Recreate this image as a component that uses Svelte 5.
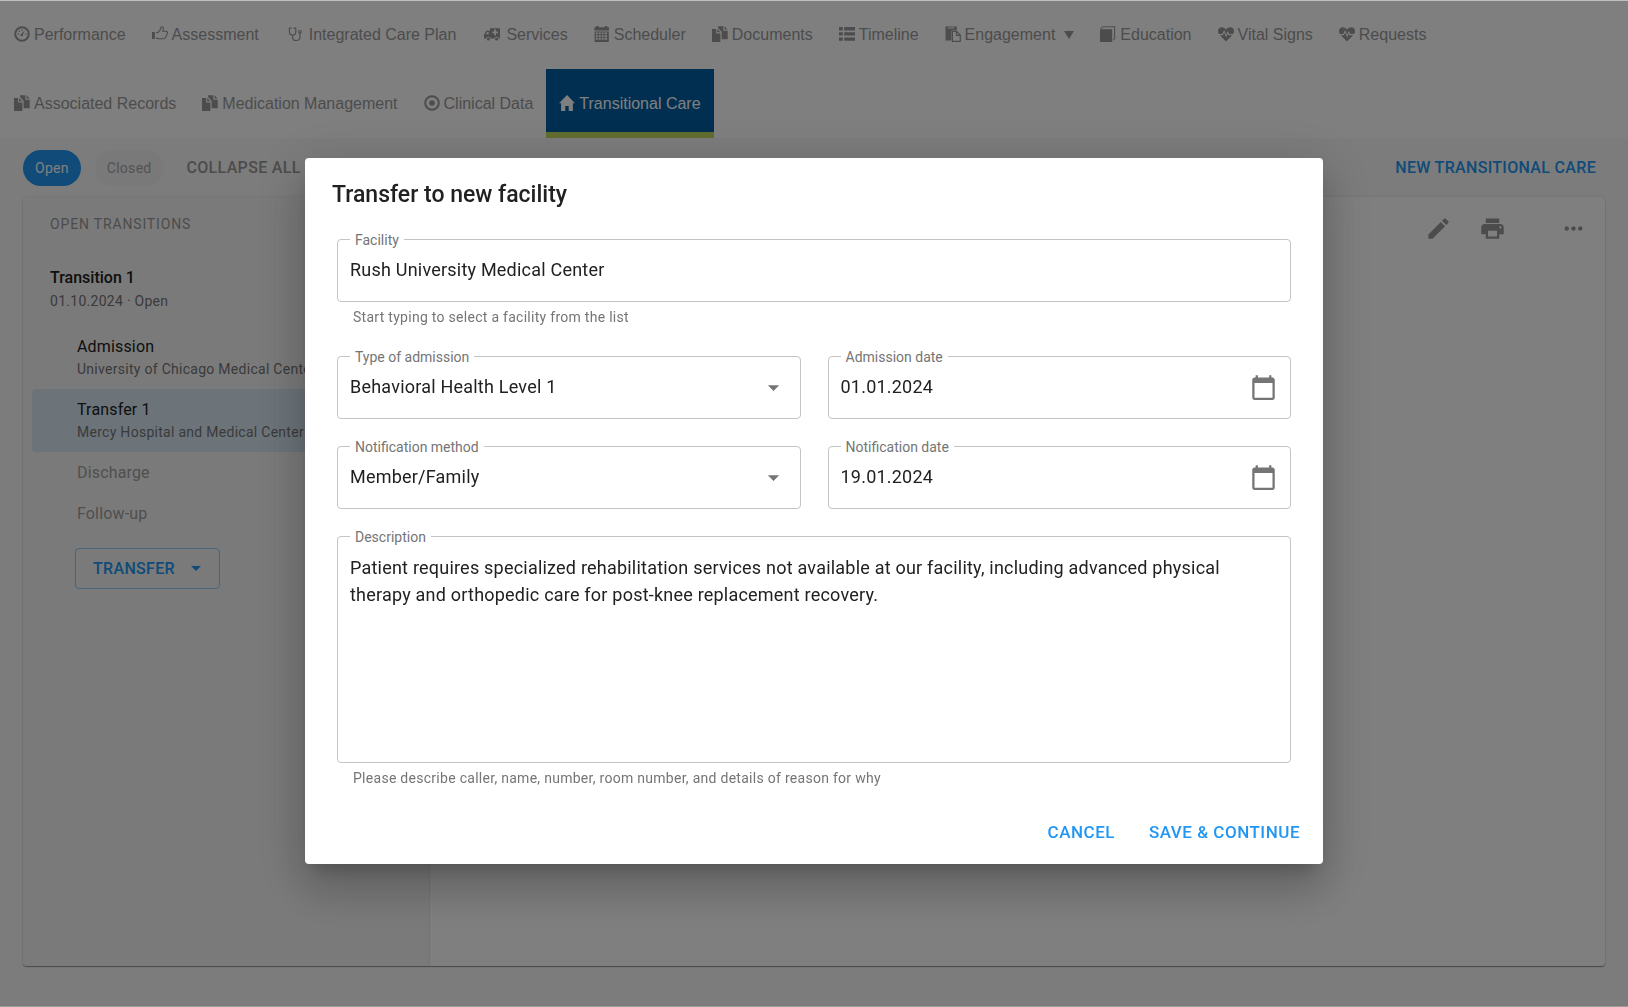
<script lang="ts">
  interface NavItem {
    label: string;
    icon: string;
    wide?: boolean;
    menu?: boolean;
    active?: boolean;
  }

  // 16x16 glyphs, drawn in currentColor
  const ICONS: Record<string, string> = {
    dashboard:
      '<circle cx="8" cy="8" r="6.8" fill="none" stroke="currentColor" stroke-width="2"/><path d="M10.9 3.9 8.9 8.4a1.3 1.3 0 1 1-1.3-.7z"/><circle cx="4.2" cy="8" r=".8"/><circle cx="5.4" cy="5.2" r=".8"/><circle cx="8" cy="4" r=".8"/><circle cx="11.9" cy="8" r=".8"/>',
    thumb:
      '<path d="M0 6h2.8v7H0z"/><path d="M4.2 6.6h1.6c1.1-1.1 2.2-2.3 2.7-3.6.3-.8.2-2.3 1.1-2.3 1.3 0 1.9 1 1.7 2.2-.1.9-.5 1.6-.7 2.4h3.6c1.1 0 1.6 1 1.2 1.9l-1.7 4.2c-.4 1-1 1.4-2 1.4H7.2c-1.2 0-2-.6-3-.9" fill="none" stroke="currentColor" stroke-width="1.1" stroke-linejoin="round"/>',
    stethoscope:
      '<path d="M4.2 2.2H2.4v3.6c0 2 1.3 3.3 3.2 3.3s3.2-1.3 3.2-3.3V2.2H7M5.6 9.1v2.3c0 1.9 1.5 3.1 3.6 3.1 2.2 0 3.7-1.3 3.7-3.2V7.2" fill="none" stroke="currentColor" stroke-width="1.2" stroke-linecap="round" stroke-linejoin="round"/><circle cx="12.9" cy="5.8" r="1.3" fill="none" stroke="currentColor" stroke-width="1.1"/>',
    ambulance:
      '<path fill-rule="evenodd" d="M6 2.2h10v10.3h-1.1a2.3 2.3 0 0 0-4.5 0H6.6a2.3 2.3 0 0 0-4.5 0H0V8.4l2.4-3.6H6zM10.2 3.5v2H8.3v1.8h1.9v2H12v-2h2V5.500h-2v-2zM1.7 8.300h3V6H3.200z"/><circle cx="4.35" cy="13" r="1.6"/><circle cx="12.65" cy="13" r="1.6"/>',
    calendar:
      '<path fill-rule="evenodd" d="M2 0h2.6v1.3h6.2V0h2.6v1.3H15v3.2H.4V1.3H2zM.6 5.5h14.2V16H.6zM1.8 6.6v1.7h2V6.6zm2.9 0v1.7h2V6.6zm2.9 0v1.7h2V6.6zm2.9 0v1.7h2.6V6.6zM1.8 9.2v1.7h2V9.2zm2.9 0v1.7h2V9.2zm2.9 0v1.7h2V9.2zm2.9 0v1.7h2.6V9.2zM1.8 11.8v2h2v-2zm2.9 0v2h2v-2zm2.9 0v2h2v-2zm2.9 0v2h2.6v-2z"/>',
    copy:
      '<path d="M0 3h4.2v4.4h4.2V16H0z"/><path d="M5.2 3l3.2 3.3H5.2z"/><path d="M6 .3h5.4v4.5h4.3v8.4H9.6V5.8L6.2 2.2z"/><path d="m12.6.3 3 3.3h-3z"/>',
    list:
      '<path d="M0 1h3.8v3.4H0zm5.2 0H16v3.4H5.2zM0 6.2h3.8v3.4H0zm5.2 0H16v3.4H5.2zM0 11.4h3.8v3.4H0zm5.2 0H16v3.4H5.2z"/>',
    paste:
      '<path fill-rule="evenodd" d="M.5.5h11.3v4H6.4v9.9H.5zM3 1.5v1h6.4v-1z"/><path d="M7.4 5.5h4.4l3.5 3.6v6.2H7.4zm4.1.2v3.6h3.6" fill="none" stroke="currentColor" stroke-width="1.2"/>',
    book:
      '<path d="M0 3.2h12.2V16H0z"/><path d="M.6 2.6 2.8.7h11.8v11.8l-1.5 1.7" fill="none" stroke="currentColor" stroke-width="1.1"/>',
    heart:
      '<path d="M8 15.4 1.9 9.2h3L6.2 6.6l2 5 1.6-4 .8 1.6h3.6z"/><path d="M1 8.1C-1 5.2 0 1.2 3.9 1.2 5.8 1.2 7.1 2.3 8 3.4 8.9 2.3 10.2 1.2 12.1 1.2c3.9 0 4.9 4 2.9 6.9h-3.7L9.7 5 8.2 8.7 6.3 3.9 4.2 8.1z"/>',
    record:
      '<circle cx="8" cy="8" r="6.8" fill="none" stroke="currentColor" stroke-width="2"/><circle cx="8" cy="8" r="2.8"/>',
    home:
      '<path d="M8 0 16 8.2h-2.1V16H9.7v-5H6.3v5H2.1V8.2H0z"/>',
  };

  const navRows: NavItem[][] = [
    [
      { label: 'Performance', icon: 'dashboard' },
      { label: 'Assessment', icon: 'thumb' },
      { label: 'Integrated Care Plan', icon: 'stethoscope', wide: true },
      { label: 'Services', icon: 'ambulance', wide: true },
      { label: 'Scheduler', icon: 'calendar' },
      { label: 'Documents', icon: 'copy' },
      { label: 'Timeline', icon: 'list' },
      { label: 'Engagement', icon: 'paste', menu: true },
      { label: 'Education', icon: 'book' },
      { label: 'Vital Signs', icon: 'heart' },
      { label: 'Requests', icon: 'heart' },
    ],
    [
      { label: 'Associated Records', icon: 'copy' },
      { label: 'Medication Management', icon: 'copy' },
      { label: 'Clinical Data', icon: 'record' },
      { label: 'Transitional Care', icon: 'home', active: true },
    ],
  ];

  const steps = [
    { name: 'Admission', place: 'University of Chicago Medical Center' },
    { name: 'Transfer 1', place: 'Mercy Hospital and Medical Center', selected: true },
    { name: 'Discharge', disabled: true },
    { name: 'Follow-up', disabled: true },
  ];

  const CALENDAR = 'M20 3h-1V1h-2v2H7V1H5v2H4c-1.1 0-2 .9-2 2v16c0 1.1.9 2 2 2h16c1.1 0 2-.9 2-2V5c0-1.1-.9-2-2-2zm0 18H4V8h16v13z';

  let facility = 'Rush University Medical Center';
  let admissionType = 'Behavioral Health Level 1';
  let admissionDate = '01.01.2024';
  let method = 'Member/Family';
  let notificationDate = '19.01.2024';
  let description =
    'Patient requires specialized rehabilitation services not available at our facility, including advanced physical therapy and orthopedic care for post-knee replacement recovery.';
</script>

<div class="page">
  <nav>
    {#each navRows as row}
      <div class="nav-row">
        {#each row as item}
          <a href="#top" class:active={item.active}>
            <span class="nav-icon" class:wide={item.wide}>
              <svg viewBox="0 0 16 16" width="16" height="16" fill="currentColor">{@html ICONS[item.icon]}</svg>
            </span>
            {item.label}
            {#if item.menu}
              <svg class="nav-caret" viewBox="0 0 10 8" width="10" height="8"><path d="M0 0h10L5 8z" fill="currentColor" /></svg>
            {/if}
          </a>
        {/each}
      </div>
    {/each}
  </nav>

  <div class="toolbar">
    <button class="chip on">Open</button>
    <button class="chip">Closed</button>
    <button class="text-btn muted">Collapse all</button>
    <button class="text-btn end">New transitional care</button>
  </div>

  <main class="panel">
    <aside>
      <h2>Open transitions</h2>
      <div class="transition">
        <strong>Transition 1</strong>
        <span class="sub">01.10.2024 · Open</span>
      </div>
      <ul>
        {#each steps as step}
          <li class:selected={step.selected} class:disabled={step.disabled}>
            <span>{step.name}</span>
            {#if step.place}
              <span class="sub">{step.place}</span>
            {/if}
          </li>
        {/each}
      </ul>
      <button class="outlined">
        Transfer
        <svg viewBox="0 0 10 5" width="10" height="5"><path d="M0 0h10L5 5z" fill="currentColor" /></svg>
      </button>
    </aside>
    <section class="detail">
      <button aria-label="Edit">
        <svg viewBox="0 0 24 24" width="27" height="27"><path d="M3 17.25V21h3.75L17.81 9.94l-3.75-3.75L3 17.25zM20.71 7.04c.39-.39.39-1.02 0-1.41l-2.34-2.34a.996.996 0 0 0-1.41 0l-1.83 1.83 3.75 3.75 1.83-1.83z" /></svg>
      </button>
      <button aria-label="Print">
        <svg viewBox="0 0 24 24" width="27" height="27"><path d="M19 8H5c-1.66 0-3 1.34-3 3v6h4v4h12v-4h4v-6c0-1.66-1.34-3-3-3zm-3 11H8v-5h8v5zm3-7c-.55 0-1-.45-1-1s.45-1 1-1 1 .45 1 1-.45 1-1 1zm-1-9H6v4h12V3z" /></svg>
      </button>
      <button class="more" aria-label="More">
        <svg viewBox="0 0 24 24" width="27" height="27"><path d="M6 10c-1.1 0-2 .9-2 2s.9 2 2 2 2-.9 2-2-.9-2-2-2zm12 0c-1.1 0-2 .9-2 2s.9 2 2 2 2-.9 2-2-.9-2-2-2zm-6 0c-1.1 0-2 .9-2 2s.9 2 2 2 2-.9 2-2-.9-2-2-2z" /></svg>
      </button>
    </section>
  </main>
</div>

<div class="backdrop">
  <div class="dialog" role="dialog" aria-labelledby="dialog-title">
    <h1 id="dialog-title">Transfer to new facility</h1>
    <form id="transfer-form" on:submit|preventDefault>
      <div class="full">
        <div class="field">
          <label for="facility">Facility</label>
          <input id="facility" type="text" bind:value={facility} />
        </div>
        <p class="helper">Start typing to select a facility from the list</p>
      </div>

      <div class="field">
        <label for="type">Type of admission</label>
        <select id="type" bind:value={admissionType}>
          <option>Behavioral Health Level 1</option>
          <option>Behavioral Health Level 2</option>
        </select>
        <svg class="arrow" viewBox="0 0 24 24" width="27" height="27"><path d="m7 10 5 5 5-5z" /></svg>
      </div>
      <div class="field">
        <label for="admission-date">Admission date</label>
        <input id="admission-date" type="text" bind:value={admissionDate} />
        <button type="button" aria-label="Choose admission date">
          <svg viewBox="0 0 24 24" width="27" height="27"><path d={CALENDAR} /></svg>
        </button>
      </div>

      <div class="field">
        <label for="method">Notification method</label>
        <select id="method" bind:value={method}>
          <option>Member/Family</option>
          <option>Provider</option>
        </select>
        <svg class="arrow" viewBox="0 0 24 24" width="27" height="27"><path d="m7 10 5 5 5-5z" /></svg>
      </div>
      <div class="field">
        <label for="notification-date">Notification date</label>
        <input id="notification-date" type="text" bind:value={notificationDate} />
        <button type="button" aria-label="Choose notification date">
          <svg viewBox="0 0 24 24" width="27" height="27"><path d={CALENDAR} /></svg>
        </button>
      </div>

      <div class="full">
        <div class="field">
          <label for="description">Description</label>
          <textarea id="description" rows="7" bind:value={description}></textarea>
        </div>
        <p class="helper">Please describe caller, name, number, room number, and details of reason for why</p>
      </div>
    </form>
    <div class="actions">
      <button class="text-btn large">Cancel</button>
      <button class="text-btn large" type="submit" form="transfer-form">Save &amp; continue</button>
    </div>
  </div>
</div>

<style>
  :global(body) {
    background: #f8f8f8;
    font-family: Roboto, sans-serif;
    color: #212121;
  }

  *,
  *::before,
  *::after {
    box-sizing: border-box;
  }

  button,
  input,
  select,
  textarea {
    font-family: inherit;
    color: inherit;
    background: none;
    border: 0;
    padding: 0;
    margin: 0;
  }

  svg {
    display: block;
    flex-shrink: 0;
  }

  .page {
    display: flex;
    flex-direction: column;
    min-height: 100vh;
  }

  nav {
    background: #fff;
  }

  .nav-row {
    display: flex;
    padding-left: 1px;
  }

  .nav-row a {
    display: flex;
    align-items: center;
    height: 69px;
    padding: 0 13px;
    font-family: 'Liberation Sans', Arial, sans-serif;
    font-size: 16px;
    white-space: nowrap;
    color: #999;
    text-decoration: none;
  }

  .nav-row a.active {
    color: #fff;
    background: #005ea2;
    box-shadow: inset 0 -6px #c4dc60;
  }

  .nav-icon {
    display: flex;
    justify-content: center;
    width: 16px;
    margin: 0 4px 2px 0;
  }

  .nav-icon.wide {
    width: 20px;
  }

  .nav-caret {
    margin-left: 9px;
  }

  .toolbar {
    display: flex;
    align-items: center;
    gap: 14px;
    height: 59px;
    padding: 0 23px;
  }

  .chip {
    height: 36px;
    padding: 0 12px;
    border-radius: 18px;
    font-size: 14px;
    letter-spacing: 0.02em;
    color: #a6a6a6;
    background: #f2f2f2;
  }

  .chip.on {
    color: #fff;
    background: #2196f3;
  }

  .text-btn {
    height: 41px;
    padding: 0 9px;
    font-size: 16px;
    font-weight: 500;
    letter-spacing: 0.02em;
    text-transform: uppercase;
    color: #2196f3;
  }

  .text-btn.muted {
    color: #999;
  }

  .text-btn.end {
    margin-left: auto;
  }

  .text-btn.large {
    font-size: 17px;
    letter-spacing: 0.03em;
  }

  .panel {
    display: flex;
    flex: 1;
    margin: 0 23px 41px;
    border-radius: 4px;
    background: #fff;
    box-shadow: 0 1px 1px rgba(0, 0, 0, 0.4), 0 0 2px rgba(0, 0, 0, 0.14);
  }

  aside {
    width: 407px;
    padding: 17px 9px;
    border-right: 1px solid #e8e8e8;
    border-radius: 4px 0 0 4px;
    background: #f5f5f5;
  }

  h2 {
    margin: 0;
    padding: 0 18px;
    font-size: 14px;
    font-weight: 400;
    line-height: 20px;
    letter-spacing: 0.06em;
    text-transform: uppercase;
    color: #999;
  }

  .transition {
    display: flex;
    flex-direction: column;
    padding: 32px 18px 14px;
  }

  .transition strong {
    font-size: 16px;
    font-weight: 500;
    line-height: 24px;
  }

  .sub {
    font-size: 14px;
    line-height: 22px;
    letter-spacing: 0.02em;
    color: #757575;
  }

  ul {
    margin: 0;
    padding: 0;
    list-style: none;
  }

  li {
    display: flex;
    flex-direction: column;
    padding: 9px 45px;
    border-radius: 4px;
    font-size: 16px;
    line-height: 23px;
    letter-spacing: 0.01em;
    white-space: nowrap;
  }

  li.selected {
    background: #d8e8f4;
  }

  li.disabled {
    color: #9e9e9e;
  }

  .outlined {
    display: flex;
    align-items: center;
    gap: 16px;
    height: 41px;
    margin: 14px 0 0 43px;
    padding: 0 18px 0 17px;
    border: 1px solid #90caf9;
    border-radius: 4px;
    font-size: 16px;
    font-weight: 500;
    letter-spacing: 0.02em;
    text-transform: uppercase;
    color: #2196f3;
  }

  .detail {
    display: flex;
    flex: 1;
    align-items: flex-start;
    justify-content: flex-end;
    gap: 27px;
    padding: 18px;
    color: #999;
  }

  .detail svg,
  .field svg {
    fill: currentColor;
  }

  .detail .more {
    margin-left: 27px;
  }

  .backdrop {
    position: fixed;
    inset: 0;
    display: flex;
    align-items: center;
    justify-content: center;
    padding-top: 15px;
    border-top: 1px solid rgba(0, 0, 0, 0.25);
    border-bottom: 1px solid rgba(0, 0, 0, 0.38);
    background: rgba(0, 0, 0, 0.5);
    background-clip: padding-box;
  }

  .dialog {
    width: calc(100% - 72px);
    max-width: 1018px;
    border-radius: 4px;
    background: #fff;
    box-shadow:
      0 12px 17px -8px rgba(0, 0, 0, 0.2),
      0 27px 43px 3px rgba(0, 0, 0, 0.14),
      0 10px 52px 9px rgba(0, 0, 0, 0.12);
  }

  h1 {
    margin: 0;
    padding: 19px 27px 26px;
    font-size: 23px;
    font-weight: 500;
    line-height: 36px;
  }

  form {
    display: grid;
    grid-template-columns: 1fr 1fr;
    gap: 27px;
    padding: 0 32px;
  }

  .full {
    grid-column: 1 / -1;
  }

  .field {
    position: relative;
    display: flex;
    align-items: center;
    border: 1px solid #c4c4c4;
    border-radius: 4px;
  }

  .field label {
    position: absolute;
    top: -10px;
    left: 12px;
    padding: 0 5px;
    font-size: 14px;
    line-height: 20px;
    color: #757575;
    background: #fff;
  }

  .field input,
  .field select {
    flex: 1;
    min-width: 0;
    height: 61px;
    padding: 0 12px 2px;
    font-size: 18px;
    letter-spacing: 0.012em;
    outline: none;
    appearance: none;
  }

  .field textarea {
    flex: 1;
    height: 225px;
    padding: 17px 12px;
    font-size: 18px;
    line-height: 27px;
    letter-spacing: 0.012em;
    outline: none;
    resize: none;
  }

  .field button {
    margin-right: 13px;
    color: #757575;
  }

  .arrow {
    position: absolute;
    right: 13px;
    color: #757575;
    pointer-events: none;
  }

  .helper {
    margin: 4px 16px 0;
    font-size: 14px;
    line-height: 23px;
    letter-spacing: 0.02em;
    color: #757575;
  }

  .actions {
    display: flex;
    justify-content: flex-end;
    gap: 16px;
    padding: 21px 14px 12px;
  }
</style>
